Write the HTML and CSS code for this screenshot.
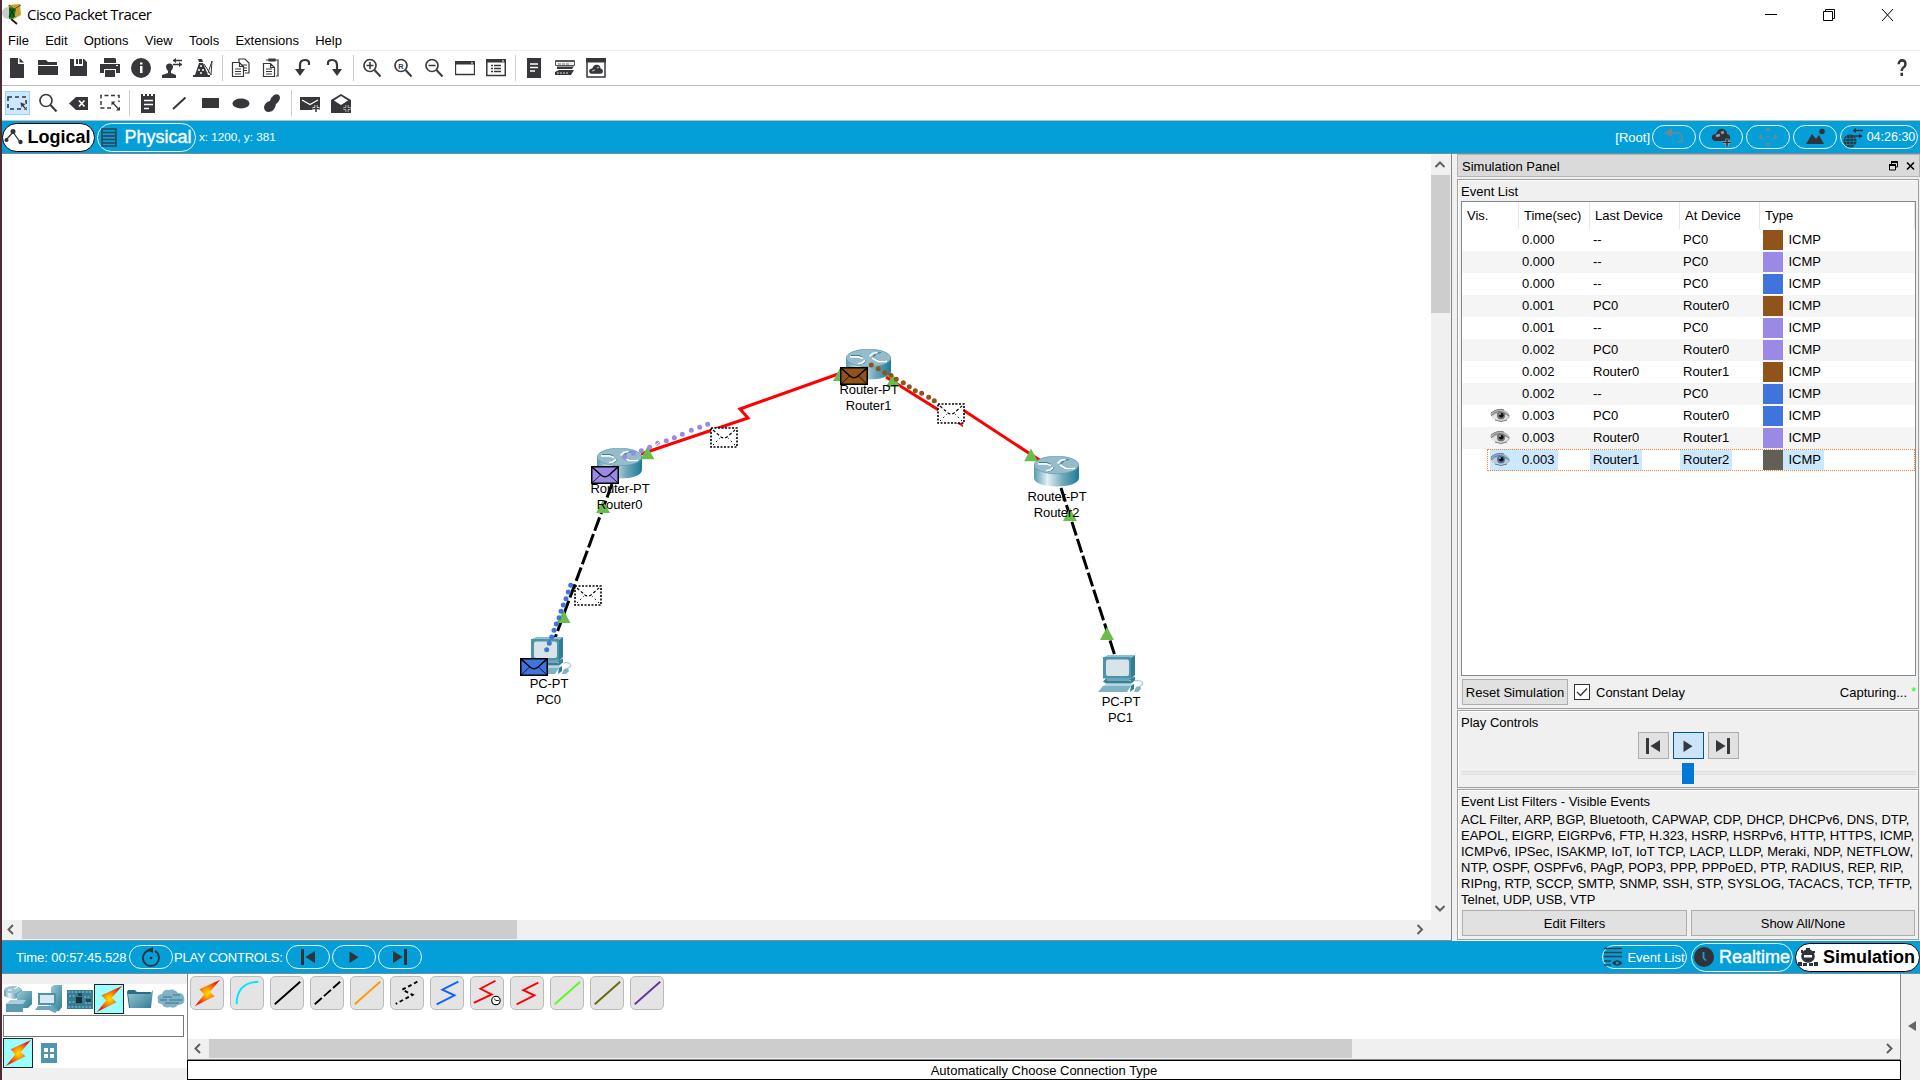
FILE: index.html
```html
<!DOCTYPE html>
<html lang="en">
<head>
<meta charset="utf-8">
<title>Cisco Packet Tracer</title>
<link rel="stylesheet" href="styles.css">
</head>
<body>
<svg class="defs" width="0" height="0">
  <defs>
    <linearGradient id="metal"><stop offset="0" stop-color="#5a9ab0"/><stop offset=".3" stop-color="#e4f0f4"/><stop offset=".65" stop-color="#6fa8ba"/><stop offset="1" stop-color="#1c7b96"/></linearGradient>
    <radialGradient id="fire"><stop offset="0" stop-color="#ffe600"/><stop offset=".45" stop-color="#ff8a00"/><stop offset="1" stop-color="#f01818"/></radialGradient>
    <linearGradient id="teal" x2="1" y2="1"><stop offset="0" stop-color="#9cc8d6"/><stop offset="1" stop-color="#2f7d97"/></linearGradient>
    <symbol id="router" viewBox="0 0 45 31">
      <path d="M0 9v13c0 5 10 8.500 22.500 8.500S45 27 45 22V9z" fill="url(#metal)"/>
      <ellipse cx="22.500" cy="9" rx="22.300" ry="8.800" fill="#94bccb" stroke="#5b96aa" stroke-width=".7"/>
      <path d="M5 6.500h8l4 2M27 8l3-3.500 5-1M28 9.500l4 2h8M14 15l4-1 2-2.500" fill="none" stroke="#3f8197" stroke-width="1.200"/>
      <path d="M4 7.800h8l5 1.700M23.500 7.500l3-3 5-1M26 9l6 3.300h9M12 14.500l4-.500 3-2.500" fill="none" stroke="#fff" stroke-width="1.700"/>
    </symbol>
    <symbol id="pc" viewBox="0 0 46 38">
      <path d="M6 2l4-2h27l-4 3z" fill="#8fc0d0"/><path d="M33 3l4-3v20l-4 4z" fill="#2d7f98"/>
      <rect x="5" y="2" width="28" height="21.500" fill="#4f93a9"/><rect x="8" y="4.500" width="23" height="16.500" rx="2" fill="#d7e5eb"/>
      <path d="M8 23.500h25l4-2v4l-4 3H8l-3-2z" fill="#367f96"/><path d="M9 25h22l2 1" stroke="#a9d1de" fill="none"/>
      <path d="M5 31h28l-4 6H0z" fill="#7fb2c3"/><path d="M5 31l3-2h27l-2 2z" fill="#b5d6e0"/><path d="M33 31l3-2v5l-4 3z" fill="#2d7f98"/>
      <path d="M37 26c4-1 8 0 8 3l-4 3" fill="none" stroke="#a8cbd6" stroke-width="1.200"/><path d="M38 32l4-1 1 3-3 3h-4z" fill="#7fb2c3"/>
    </symbol>
    <symbol id="mail" viewBox="0 0 28 18">
      <rect x=".75" y=".75" width="26.500" height="16.500" stroke="#000" stroke-width="1.500"/>
      <path d="M1 1l9.500 8.500q3.500 2.500 7 0L27 1" fill="none" stroke="#000" stroke-width="1.500"/><path d="M1 17l8.500-8M27 17l-8.500-8" fill="none" stroke="#000" stroke-width=".8"/>
    </symbol>
    <symbol id="ghost" viewBox="0 0 28 21">
      <rect x="1" y="1" width="26" height="19" fill="#fff" stroke="#000" stroke-width="1.600" stroke-dasharray="2 1.500"/>
      <path d="M3 3l8 7q3 2 6 0l8-7" fill="none" stroke="#000" stroke-width="1.100" stroke-dasharray="3 2"/><path d="M3 18l7-7M25 18l-7-7" fill="none" stroke="#000" stroke-width="1" stroke-dasharray="1.500 3"/>
    </symbol>
    <symbol id="tri" viewBox="0 0 14 13"><path d="M7 0l7 13H0z" fill="#69be4b"/></symbol>
    <symbol id="bolt" viewBox="0 0 30 30"><path d="M29 1L7 11l5 5.500L2 29l21-10.500-5-4.500z" fill="url(#fire)"/></symbol>
    <symbol id="first" viewBox="0 0 16 16"><path d="M1 0h3v16H1zM15 2v12L5.500 8z"/></symbol>
    <symbol id="play" viewBox="0 0 16 16"><path d="M3.500 2.500v11.500l9-5.800z"/></symbol>
    <symbol id="last" viewBox="0 0 16 16"><path d="M15 0h-3v16h3zM1 2v12l9.500-6z"/></symbol>
    <symbol id="eye" viewBox="0 0 20 16"><path d="M0 6Q8-1 14 2t6 7q-6 6-14 3Q2 9 0 6z" fill="#b9b9b9"/><path d="M1 9Q7 3 19 8q-4 6-11 5Q4 12 1 9z" fill="#e3e3e3"/><path d="M1 8Q8-1 19 8M5 12q6 3 12 0M1 5q6-5 13-3" fill="none" stroke="#777"/><circle cx="11" cy="7.500" r="4" fill="#707070"/><circle cx="11.300" cy="7.300" r="2.300" fill="#111"/><circle cx="10" cy="6" r=".8" fill="#fff"/></symbol>
    <symbol id="lens" viewBox="0 0 20 20"><circle cx="8" cy="7.500" r="6" fill="none" stroke="#3b3b3f" stroke-width="1.700"/><path d="M12.500 12l6 6.500" stroke="#3b3b3f" stroke-width="2"/></symbol>
    <symbol id="cloud" viewBox="0 0 20 14"><path d="M4 13Q0 12 1 8q1-2 4-2Q7 0 12 1q4 1 4 5 4 1 3 5-1 2-3 2z"/></symbol>
  </defs>
</svg>
<div class="app">
  <div class="edge"></div>
  <div class="window">
    <header class="titlebar">
      <svg class="logo" width="20" height="22" viewBox="0 0 20 22"><path d="M6 2l12-1 1 11-9 5z" fill="#c9a032"/><path d="M7 2l5 4 7-4" fill="none" stroke="#6d4d10"/><circle cx="6" cy="10" r="6" fill="#c8cdc8"/><path d="M7 4l7 2-2 9-5 1z" fill="#0d6b1c"/><path d="M8 6l5 8M12 6l-5 8" stroke="#022f08"/><path d="M9 16l6 5" stroke="#222" stroke-width="2"/></svg>
      <span class="title">Cisco Packet Tracer</span>
      <svg class="winctl" width="132" height="14" viewBox="0 0 132 14" fill="none" stroke="#000"><path d="M0 6.500h12M58.500 3.500h9v9h-9zM60.500 3v-1.500h9v9h-2M117 1l11 12M128 1l-11 12"/></svg>
    </header>
    <nav class="menu"><span>File</span><span>Edit</span><span>Options</span><span>View</span><span>Tools</span><span>Extensions</span><span>Help</span></nav>
    <div class="toolbar first">
      <svg viewBox="0 0 20 20"><path d="M3 0h8v6h6v14H3zM12.500 0L17 4.500h-4.500z"/></svg>
      <svg viewBox="0 0 20 20"><path d="M0 2h8l2 2h9v3H0zM0 8h20v9H0z"/></svg>
      <svg viewBox="0 0 20 20"><path d="M1 1h4v7h9V1h1l3 3v14H1zM10 1h3v5h-3zM7 1h2v5H7z"/></svg>
      <svg viewBox="0 0 20 20"><path d="M4 0h11l1 1v4H4zM0 6h20v9h-4v-4H4v4H0zM5 12h10v7H5z"/><path d="M16 7.500h2" stroke="#fff"/></svg>
      <svg viewBox="0 0 20 20"><circle cx="10" cy="10" r="10"/><path d="M9 8h2.500v7H9zM9 4.500h2.500v2H9z" fill="#fff"/></svg>
      <svg viewBox="0 0 20 20"><path d="M4 9a3.500 3.500 0 017 0q0 2-2 4v2l5 2v3H0v-3l6-2v-2Q4 11 4 9z"/><path d="M11 2.500h9M11 6.500h9" stroke="#36363b" stroke-width="1.300"/><path d="M14 0v5l-3-2.500zM17 4v5l3-2.500z"/></svg>
      <svg viewBox="0 0 20 20"><path d="M5 1h4l1 3h-4zM6 5h4l5 12H2zM0 17h17v2H0z"/><path d="M11 6l7 11 1-14-4 12" fill="none" stroke="#36363b"/><path d="M7 8h2M5 12h2M9 12h2M7 15h2" stroke="#fff" stroke-width="1.500"/></svg>
      <i></i>
      <svg viewBox="0 0 20 20" class="line"><path d="M8 4V1h6l4 4v10h-4"/><path d="M1.500 4.500h7l4 4v10h-11zM8.500 4.500v4h4M4 11h6M4 13.500h6M4 16h6M10 7h6M13 10h3M13 12.500h3"/></svg>
      <svg viewBox="0 0 20 20" class="line"><path d="M4 2h12v16h-2M7 1h6v2H7z"/><path d="M1.500 5.500h7l4 4v9h-11zM8.500 5.500v4h4M4 11h6M4 13.500h6M4 16h6"/></svg>
      <svg viewBox="0 0 20 20"><path d="M16 7V5q0-3-4-3-5 0-5 5v6" fill="none" stroke="#36363b" stroke-width="2.200"/><path d="M2 11h10l-5 7z"/></svg>
      <svg viewBox="0 0 20 20"><path d="M4 7V5q0-3 4-3 5 0 5 5v6" fill="none" stroke="#36363b" stroke-width="2.200"/><path d="M8 11h10l-5 7z"/></svg>
      <i></i>
      <svg viewBox="0 0 20 20"><use href="#lens"/><path d="M4.500 7.500h7M8 4v7" stroke="#36363b" stroke-width="1.500"/></svg>
      <svg viewBox="0 0 20 20"><use href="#lens"/><text x="5.200" y="10.500" class="micro">R</text></svg>
      <svg viewBox="0 0 20 20"><use href="#lens"/><path d="M4.500 7.500h7" stroke="#36363b" stroke-width="1.500"/></svg>
      <svg viewBox="0 0 20 20"><path d="M.5 4.500h19v12H.5z" fill="none" stroke="#36363b" stroke-width="1.300"/><path d="M0 3h20v3.500H0z"/><path d="M16 5h2" stroke="#fff"/></svg>
      <svg viewBox="0 0 20 20"><path d="M.8 2.500h18.500v15H.8z" fill="none" stroke="#36363b" stroke-width="1.500"/><path d="M0 1h20v3.500H0z"/><path d="M16 3h2" stroke="#fff"/><path d="M5 7.500h2M8 7.500h7M5 10.500h2M8 10.500h7M5 13.500h2M8 13.500h7" stroke="#36363b" stroke-width="1.500"/></svg>
      <i></i>
      <svg viewBox="0 0 20 20"><path d="M3 0h14v20H3z"/><path d="M6 6h8M6 9.500h8M6 13h5" stroke="#fff" stroke-width="1.400"/></svg>
      <svg viewBox="0 0 20 20"><path d="M.5 2.500h19v5H.5z" fill="#eee" stroke="#555"/><path d="M1 3.500h18" stroke="#555"/><path d="M3 6h11" stroke="#777" stroke-dasharray="3 1"/><path d="M2 8.500h17l-2 2.500H2zM4 12h15l-3 5H0v-3z"/><path d="M2 15h11" stroke="#ddd" stroke-dasharray="2 1"/></svg>
      <svg viewBox="0 0 20 20"><path d="M1 1h18v18H1z" fill="none" stroke="#36363b" stroke-width="1.500"/><path d="M0 0h20v4.500H0z"/><use href="#cloud" x="2.500" y="6" width="15" height="10.500"/><path d="M6 13l3-1M11 10l2-1" stroke="#bbb" stroke-width="1.300"/></svg>
      <span class="help">?</span>
    </div>
    <div class="toolbar second">
      <span class="picked"><svg viewBox="0 0 20 20"><path d="M1 4h18v12H1z" fill="none" stroke="#36363b" stroke-width="1.600" stroke-dasharray="4 3"/><path d="M13 9l6 2-2 1.500 3 4-1 1-3.500-4-1 2z" stroke="#cce8ff" stroke-width=".6"/></svg></span>
      <svg viewBox="0 0 20 20"><use href="#lens"/></svg>
      <svg viewBox="0 0 20 20"><path d="M0 10.500L7 4h12v13H7z"/><path d="M10 7.500l5.500 6M15.500 7.500l-5.500 6" stroke="#fff" stroke-width="1.700"/></svg>
      <svg viewBox="0 0 20 20"><path d="M11 15H1V2.500h18V9" fill="none" stroke="#36363b" stroke-width="1.500" stroke-dasharray="4 2.500"/><path d="M12.500 9.500l6.500 7" stroke="#36363b" stroke-width="1.300"/><path d="M11.500 8.500h4l-4 4zM20 17.500h-4l4-4z"/></svg>
      <i></i>
      <svg viewBox="0 0 20 20"><path d="M3 1h2v2h2V1h2v2h2V1h2v2h2V1h2v19H3z"/><path d="M6 7.500h9M6 11.500h9M6 15.500h5" stroke="#fff" stroke-width="1.500"/></svg>
      <svg viewBox="0 0 20 20"><path d="M4 16L16.500 4.500" stroke="#36363b" stroke-width="2"/></svg>
      <svg viewBox="0 0 20 20"><path d="M2 5h17v10H2z"/></svg>
      <svg viewBox="0 0 20 20"><ellipse cx="10" cy="10.500" rx="8.500" ry="5"/></svg>
      <svg viewBox="0 0 20 20"><path d="M12 2q5-2 6 2 0 4-4 7-1 7-7 8-5 0-5-5 1-5 6-6 1-4 4-6z"/></svg>
      <i></i>
      <svg viewBox="0 0 20 20"><path d="M0 4h20v13H0z"/><path d="M2 7l8 4.500L18 7" fill="none" stroke="#fff" stroke-width="1.300"/><path d="M12.500 15.500h7M16 12v7" stroke="#fff" stroke-width="3"/><path d="M12.500 15.500h7M16 12v7" stroke="#36363b" stroke-width="1.500"/></svg>
      <svg viewBox="0 0 20 20"><path d="M0 7l10-6 10 6v13H0z"/><path d="M3 7.500L10 3l7 4.500-7 4.500z" fill="#fff"/><path d="M12.500 15.500h7M16 12v7" stroke="#ccc" stroke-width="3"/><path d="M12.500 15.500h7M16 12v7" stroke="#36363b" stroke-width="1.500"/></svg>
    </div>
    <div class="bluebar top">
      <div class="pill big on logical"><svg width="19" height="16" viewBox="0 0 19 16"><path d="M2 11l7-8 7 10" fill="none" stroke="#333" stroke-width="1.300"/><circle cx="2.500" cy="11" r="2"/><circle cx="9" cy="2.500" r="2.500"/><circle cx="16.500" cy="13" r="2.200"/></svg>Logical</div>
      <div class="pill big physical"><svg width="16" height="19" viewBox="0 0 16 19"><path d="M1 1h14v17H1zM1 4.500h14M1 8h14M1 11.500h14M1 15h14" fill="none" stroke="#2c4250" stroke-width="1.500"/></svg>Physical</div>
      <span class="coords">x: 1200, y: 381</span>
      <span class="root">[Root]</span>
      <div class="pill"><svg width="22" height="18" viewBox="0 0 22 18"><path d="M8 5h7q5 0 4 9h-5" fill="none" stroke="#728793" stroke-width="1.700"/><path d="M1 5l8-5v9z" fill="#728793"/></svg></div>
      <div class="pill"><svg width="22" height="20" viewBox="0 0 22 20" fill="#303338"><use href="#cloud" x="1" y="1" width="20" height="14"/><path d="M6 9l4-1M11 6l3-1" stroke="#999" stroke-width="2.500"/><path d="M13 15.500h8M17 11.500v8" stroke="#9bc" stroke-width="3"/><path d="M13 15.500h8M17 11.500v8" stroke="#333" stroke-width="1.600"/></svg></div>
      <div class="pill"><svg width="20" height="20" viewBox="0 0 20 20"><path fill="#728793" d="M7 4h6l-3-4zM7 16h6l-3 4zM4 7v6l-4-3zM16 7v6l4-3zM9 9h2v2H9z"/></svg></div>
      <div class="pill"><svg width="20" height="18" viewBox="0 0 20 18"><path d="M1 16l6-10 4 5 3-4 5 9z"/><circle cx="17" cy="3.500" r="2.800"/></svg></div>
      <div class="pill clock"><svg width="22" height="21" viewBox="0 0 22 21"><circle cx="8" cy="14" r="6.500"/><path d="M2 11.500h12M2 14.500h12M3 17.500h10M8 8v13M5 9q-2 5 0 10M11 9q2 5 0 10" fill="none" stroke="#0486b8" stroke-width=".8"/><path d="M11 3.500h10M11 9h9" stroke="#303338" stroke-width="1.500"/><path d="M14 1v5l-3-2.500zM17 6.500v5l3-2.500z"/></svg>04:26:30</div>
    </div>
    <main class="main">
      <section class="work">
        <svg class="topology" width="1429" height="766" viewBox="2 154 1429 766">
          <g fill="none" stroke="#f00" stroke-width="3"><path d="M641 454L748 418l-8-9 101-36"/><path d="M886 377l75 47-4-18 84 55"/></g>
          <g stroke="#000" stroke-width="3" stroke-dasharray="14.300 3.500"><path d="M612 484l-57 154"/><path d="M1061 488l54 168"/></g>
          <g>
            <use href="#router" x="597" y="448" width="45" height="31"/><use href="#router" x="846" y="349" width="45" height="31"/><use href="#router" x="1034" y="456" width="45" height="31"/>
            <use href="#pc" x="526" y="637" width="46" height="38"/><use href="#pc" x="1098" y="655" width="46" height="38"/>
          </g>
          <g>
            <use href="#tri" x="640.500" y="446.500" width="14" height="13"/><use href="#tri" x="596" y="500" width="14" height="13"/><use href="#tri" x="556.500" y="610" width="14" height="13"/><use href="#tri" x="833" y="368" width="14" height="13"/><use href="#tri" x="886" y="374" width="14" height="13"/><use href="#tri" x="1024" y="448.500" width="14" height="13"/><use href="#tri" x="1063" y="508" width="14" height="13"/><use href="#tri" x="1100" y="627" width="14" height="13"/>
          </g>
          <g class="label">
            <text x="620" y="493">Router-PT</text><text x="619.500" y="509">Router0</text>
            <text x="869" y="394">Router-PT</text><text x="868.500" y="410">Router1</text>
            <text x="1057" y="501">Router-PT</text><text x="1056.500" y="517">Router2</text>
            <text x="549" y="688">PC-PT</text><text x="548.500" y="704">PC0</text>
            <text x="1121" y="706">PC-PT</text><text x="1120.500" y="722">PC1</text>
          </g>
          <use href="#mail" x="520" y="658" width="28" height="18" fill="#3f74dc"/><use href="#mail" x="591" y="466" width="28" height="18" fill="#9a8ae6"/><use href="#mail" x="840" y="367" width="28" height="18" fill="#90531a"/>
          <use href="#ghost" x="574" y="585" width="28" height="21"/><use href="#ghost" x="710" y="427" width="28" height="21"/><use href="#ghost" x="937" y="403" width="28" height="21"/>
          <g fill="none" stroke-width="5" stroke-linecap="round">
            <path stroke="#9a8ae6" d="M624.700 457.300h0M633.300 453.300h0M641.300 450.700h0M649.700 447.300h0M657.700 443.300h0M666.300 440.700h0M674.300 437.700h0M682.300 434.300h0M691.300 430.300h0M699.700 427.300h0M707.700 424.300h0"/>
            <path stroke="#3f74dc" d="M546.700 649.700h0M549.300 643.300h0M551.700 637h0M554 630.300h0M556.300 624h0M559 617.700h0M561 611.300h0M563.300 605h0M566 598.700h0M568.300 592h0M570.700 585.300h0"/>
            <path stroke="#90531a" d="M871.300 365h0M878.300 368.700h0M884.700 372.700h0M890.700 375.300h0M896.300 379.300h0M903.300 382.700h0M909.300 386.700h0M915.300 390.700h0M921.700 393.300h0M928.700 397.300h0M934.300 400.700h0"/>
            <path stroke="#fff" stroke-width="1" d="M656 445l3.500-3.500M657.500 446l2.500-2.500"/>
          </g>
        </svg>
        <div class="vscroll"><svg width="18" height="21" viewBox="0 0 18 21"><path d="M4.500 13L9 8.500l4.500 4.500"/></svg><b></b><svg class="end" width="18" height="20" viewBox="0 0 18 20"><path d="M4.500 6L9 10.500 13.500 6"/></svg></div>
        <div class="hscroll"><svg width="20" height="19" viewBox="0 0 20 19"><path d="M11 5L6.500 9.500 11 14"/></svg><b></b><svg class="end" width="20" height="19" viewBox="0 0 20 19"><path d="M6.500 5l4.500 4.500L6.500 14"/></svg></div>
        <div class="corner"></div>
      </section>
      <aside class="panel">
        <div class="paneltitle">Simulation Panel<svg width="30" height="12" viewBox="0 0 30 12" fill="none" stroke="#000"><path d="M1.500 5h6v5h-6zM3.500 4V2h6v5H8" /><path d="M1 5h7M3 2h7" stroke-width="2"/><path d="M19 2.500l7 7M26 2.500l-7 7" stroke-width="1.600"/></svg></div>
        <section class="group events">
          <div class="cap">Event List</div>
          <div class="table">
            <div class="thead"><span>Vis.</span><span>Time(sec)</span><span>Last Device</span><span>At Device</span><span>Type</span></div>
            <div class="row"><span></span><span>0.000</span><span>--</span><span>PC0</span><span><i class="brown"></i>ICMP</span></div>
            <div class="row"><span></span><span>0.000</span><span>--</span><span>PC0</span><span><i class="violet"></i>ICMP</span></div>
            <div class="row"><span></span><span>0.000</span><span>--</span><span>PC0</span><span><i class="blue"></i>ICMP</span></div>
            <div class="row"><span></span><span>0.001</span><span>PC0</span><span>Router0</span><span><i class="brown"></i>ICMP</span></div>
            <div class="row"><span></span><span>0.001</span><span>--</span><span>PC0</span><span><i class="violet"></i>ICMP</span></div>
            <div class="row"><span></span><span>0.002</span><span>PC0</span><span>Router0</span><span><i class="violet"></i>ICMP</span></div>
            <div class="row"><span></span><span>0.002</span><span>Router0</span><span>Router1</span><span><i class="brown"></i>ICMP</span></div>
            <div class="row"><span></span><span>0.002</span><span>--</span><span>PC0</span><span><i class="blue"></i>ICMP</span></div>
            <div class="row"><span><svg width="20" height="16"><use href="#eye"/></svg></span><span>0.003</span><span>PC0</span><span>Router0</span><span><i class="blue"></i>ICMP</span></div>
            <div class="row"><span><svg width="20" height="16"><use href="#eye"/></svg></span><span>0.003</span><span>Router0</span><span>Router1</span><span><i class="violet"></i>ICMP</span></div>
            <div class="row sel"><span><svg width="20" height="16"><use href="#eye"/></svg></span><span><em>0.003</em></span><span><em>Router1</em></span><span><em>Router2</em></span><span><i class="gray"></i><em>ICMP</em></span></div>
          </div>
          <div class="simrow"><button class="reset">Reset Simulation</button><span class="check"><svg width="14" height="14" viewBox="0 0 14 14"><path d="M2 7l3.500 3.500L12 3.500" fill="none" stroke="#333" stroke-width="1.300"/></svg></span><span>Constant Delay</span><span class="capturing">Capturing...</span><span class="star">*</span></div>
        </section>
        <section class="group controls">
          <div class="cap">Play Controls</div>
          <div class="btns"><button><svg width="16" height="16"><use href="#first"/></svg></button><button class="active"><svg width="16" height="16"><use href="#play"/></svg></button><button><svg width="16" height="16"><use href="#last"/></svg></button></div>
          <div class="slider"><b></b></div>
        </section>
        <section class="group filters">
          <div class="cap">Event List Filters - Visible Events</div>
          <div class="list">ACL Filter, ARP, BGP, Bluetooth, CAPWAP, CDP, DHCP, DHCPv6, DNS, DTP,<br>EAPOL, EIGRP, EIGRPv6, FTP, H.323, HSRP, HSRPv6, HTTP, HTTPS, ICMP,<br>ICMPv6, IPSec, ISAKMP, IoT, IoT TCP, LACP, LLDP, Meraki, NDP, NETFLOW,<br>NTP, OSPF, OSPFv6, PAgP, POP3, PPP, PPPoED, PTP, RADIUS, REP, RIP,<br>RIPng, RTP, SCCP, SMTP, SNMP, SSH, STP, SYSLOG, TACACS, TCP, TFTP,<br>Telnet, UDP, USB, VTP</div>
          <div class="fbtns"><button>Edit Filters</button><button>Show All/None</button></div>
        </section>
      </aside>
    </main>
    <div class="bluebar bottom">
      <span class="time">Time: 00:57:45.528</span>
      <div class="pill"><svg width="20" height="20" viewBox="0 0 20 20"><path d="M9 3a8 8 0 105 1" fill="none" stroke="#303338" stroke-width="1.800"/><path d="M6 3l6-3v6z"/><circle cx="10" cy="11" r="1.300"/></svg></div>
      <span class="pc-label">PLAY CONTROLS:</span>
      <div class="pill gap"><svg width="16" height="16"><use href="#first"/></svg></div>
      <div class="pill gap"><svg width="16" height="16"><use href="#play"/></svg></div>
      <div class="pill gap"><svg width="16" height="16"><use href="#last"/></svg></div>
      <div class="pill evlist"><svg width="19" height="20" viewBox="0 0 19 20"><path d="M0 1.500h18M0 5.500h18M0 9.500h18M0 14h7M0 18h7" stroke="#2c4250" stroke-width="1.500"/><path d="M8 16q5-5.500 10.500 0-5.500 5.500-10.500 0z"/><circle cx="13.200" cy="16" r="1.500" fill="#049fd9"/></svg>Event List</div>
      <div class="pill big realtime"><svg width="20" height="20" viewBox="0 0 20 20"><circle cx="10" cy="10" r="10"/><path d="M9.500 5v6l2.500 2.500" fill="none" stroke="#1aa0d6" stroke-width="1.700"/></svg>Realtime</div>
      <div class="pill big on simulation"><svg width="20" height="18" viewBox="0 0 20 18"><circle cx="10" cy="8" r="6.800"/><path d="M8 0h4v3H8zM0 14h4v4H0zM5 15h4v3H5zM11 15h4v3h-4zM16 14h4v4h-4zM3 2h2v3H3zM15 3h2v2h-2z"/><path d="M6 7h8v2.500H6z" fill="#fff"/></svg>Simulation</div>
    </div>
    <footer class="bottom-area">
      <div class="palette">
        <div class="cats">
          <svg width="29" height="28" viewBox="0 0 29 28"><ellipse cx="9" cy="5" rx="9" ry="4" fill="#9cc4d1"/><path d="M0 5q9 7 18 0v6q-9 6-18 0z" fill="url(#metal)"/><path d="M4 5h4M10 4l4-2" stroke="#fff"/><path d="M13 9l4-3h11v13l-4 4H13z" fill="url(#teal)"/><path d="M2 19l5-4h15l-3 5v7H2z" fill="#5b9bb0"/><path d="M2 19l5-4h15l-3 4z" fill="#a9cfda"/></svg>
          <svg class="c2" width="28" height="28" viewBox="0 0 28 28"><path d="M16 2l3-2h8v22l-3 4h-8z" fill="url(#teal)"/><path d="M3 8h18v12H3z" fill="#4f93a9"/><path d="M5 10h14v8H5z" fill="#d7e8ee"/><path d="M3 21h14l-2 4H0zM14 20l9 5-3 3-8-4z" fill="#6aa5b8"/></svg>
          <svg class="c3" width="26" height="19" viewBox="0 0 26 19"><rect width="26" height="19" fill="#347d95"/><path d="M1 2h24M1 17h24M2 6h7M17 7h7M2 12h6M18 13h6" stroke="#9cc6d2" stroke-dasharray="2 1.500"/><rect x="9" y="7" width="6" height="6" fill="#162f39"/><path d="M11 3h4v3h-4zM19 9h5v3h-5z" fill="#1e4654"/></svg>
          <span class="tile c4"><svg width="28" height="28"><use href="#bolt"/></svg></span>
          <svg class="c5" width="27" height="20" viewBox="0 0 27 20"><path d="M0 3l1-2h7l2 2h14v16H2z" fill="#286e86"/><path d="M1 5h22l3-4-2 18H3z" fill="url(#teal)"/></svg>
          <svg class="c5" width="28" height="20" viewBox="0 0 28 20"><path d="M5 15Q0 15 1 11q-2-5 4-6Q7 0 12 1q5-2 9 3 6 0 6 5 2 6-6 7-3 4-8 2-6 2-8-3z" fill="#7fb2c4"/><path d="M6 8h9M3 11h7M12 11h13M8 14h14M16 6h7" stroke="#4d8ba0" stroke-width="1.500"/></svg>
        </div>
        <div class="search"></div>
        <div class="subs"><span class="tile"><svg width="28" height="28"><use href="#bolt"/></svg></span><svg width="16" height="20" viewBox="0 0 16 20"><path d="M0 0h16v20H0z" fill="#4f95ad"/><path d="M3 5h4v4H3zM9 5h4v4H9zM3 11h4v4H3zM9 11h4v4H9z" fill="#fff"/></svg></div>
      </div>
      <div class="devices">
        <div class="conns">
          <svg viewBox="0 0 34 34"><use href="#bolt" x="2" y="2" width="30" height="30"/></svg>
          <svg viewBox="0 0 34 34"><path d="M6 29Q6 6 29 5" stroke="#00e5ff"/></svg>
          <svg viewBox="0 0 34 34"><path d="M4 29L31 5" stroke="#000"/></svg>
          <svg viewBox="0 0 34 34"><path d="M4 29L31 5" stroke="#000" stroke-dasharray="10 3"/></svg>
          <svg viewBox="0 0 34 34"><path d="M4 29L31 5" stroke="#ff9900"/></svg>
          <svg viewBox="0 0 34 34"><path d="M28 5L12 13.500l11 5.500L5 28.500" stroke="#000" stroke-dasharray="4 3"/></svg>
          <svg viewBox="0 0 34 34"><path d="M29 5L12 13.500l13 6L6 29" stroke="#0866ff"/></svg>
          <svg viewBox="0 0 34 34"><path d="M26 4L10 12.500l12 6L3 27.500" stroke="#f00"/><circle cx="26.500" cy="25" r="4.500" fill="#fff" stroke="#000" stroke-width="1.200"/><path d="M26.500 25l-2-2M26.500 25h3" stroke="#000" stroke-width="1"/></svg>
          <svg viewBox="0 0 34 34"><path d="M29 6L13 14l12 5.500L6 29" stroke="#f00"/></svg>
          <svg viewBox="0 0 34 34"><path d="M4 29L31 5" stroke="#63f52b"/></svg>
          <svg viewBox="0 0 34 34"><path d="M4 29L31 5" stroke="#6b6708"/></svg>
          <svg viewBox="0 0 34 34"><path d="M4 29L31 5" stroke="#663399"/></svg>
        </div>
        <div class="hscroll"><svg width="21" height="19" viewBox="0 0 21 19"><path d="M12 5L7.500 9.500 12 14"/></svg><b></b><svg class="end" width="20" height="19" viewBox="0 0 20 19"><path d="M7 5l4.500 4.500L7 14"/></svg></div>
        <div class="hint">Automatically Choose Connection Type</div>
      </div>
      <div class="collapse"><svg width="8" height="10" viewBox="0 0 8 10"><path d="M8 0v10L0 5z" fill="#666"/></svg></div>
    </footer>
  </div>
</div>
</body>
</html>
```
FILE: styles.css
```css
* { box-sizing: border-box; }
body { margin: 0; width: 1920px; height: 1080px; overflow: hidden; font: 13px "Liberation Sans", Arial, sans-serif; color: #000; background: #fff; }
svg { display: block; flex: none; }
.defs { position: absolute; }
button { font: inherit; padding: 0; margin: 0; border: 1px solid #adadad; background: #e1e1e1; color: #000; display: flex; align-items: center; justify-content: center; }
.app { display: flex; height: 1080px; }
.edge { width: 2px; background: #4b2b35; }
.window { width: 1918px; display: flex; flex-direction: column; }

.titlebar { height: 30px; display: flex; align-items: center; }
.logo { margin: -2px 0 0 0; }
.title { margin: -2px 0 0 5px; font: 15px "Open Sans", "Noto Sans", sans-serif; letter-spacing: -0.56px; white-space: nowrap; }
.winctl { margin: -1px 23px 0 auto; }
.menu { height: 20px; padding: 1px 0 0 6px; display: flex; gap: 16.2px; align-items: center; line-height: 19px; }

.toolbar { height: 35px; display: flex; align-items: center; border-top: 1px solid #f0f0f0; fill: #36363b; }
.toolbar > svg { width: 20px; height: 20px; margin: 0 6px 0 5px; }
.toolbar i { width: 7px; height: 26px; background: linear-gradient(#ccc, #ccc) 3px 0 / 1px 100% no-repeat; }
.toolbar.first { height: 36px; margin-top: 0; border-bottom: 1px solid #bdbdbd; }
.toolbar.second { height: 35px; border-top: 0; border-bottom: 1px solid #bdbdbd; }
.line { fill: none; stroke: #36363b; stroke-width: 1.2; }
.micro { font: bold 7.5px "Liberation Sans", sans-serif; }
.help { margin: 0 11px 0 auto; font: bold 23px/20px "Liberation Sans", sans-serif; color: #36363b; transform: scaleX(.8); }
.picked { width: 25px; height: 24px; margin: 0 3px; padding: 1px 2px; background: #cce8ff; border: 1px solid #99d1ff; }
.picked svg { width: 20px; height: 20px; margin-left: -1px; }

.bluebar { height: 33px; background: #049fd9; color: #fff; display: flex; align-items: center; fill: #303338; white-space: nowrap; }
.bluebar.top { border-bottom: 1px solid #828790; }
.pill { width: 44px; height: 24px; border: 1px solid #e6f5fb; border-radius: 12px; display: flex; align-items: center; justify-content: center; flex: none; }
.top .pill:not(.big) { margin-left: 3px; }
.pill.big { height: 29px; border-radius: 15px; font-size: 18px; -webkit-text-stroke: .35px currentColor; }
.pill.on { background: #fff; border-color: #000; color: #000; font-weight: bold; -webkit-text-stroke: 0; }
.logical { width: 93px; gap: 4px; margin-left: 0; padding-right: 2px; }
.physical { width: 99px; margin-left: 2px; gap: 7px; }
.coords { margin: -2px 0 0 3px; font-size: 11.7px; }
.root { margin: 0 -1px 0 auto; }
.top .clock { width: 78px; gap: 3px; font-size: 12.5px; margin-right: 2px; padding-right: 1px; }

.main { height: 787px; display: flex; background: #f0f0f0; }
.work { width: 1450px; display: grid; grid-template-columns: 1429px 20px; grid-template-rows: 766px 20px; border-right: 1px solid #828790; border-bottom: 1px solid #828790; }
.topology { background: #fff; }
.label { font: 13px "Liberation Sans", Arial, sans-serif; text-anchor: middle; letter-spacing: -.1px; }
.vscroll, .hscroll { background: #f0f0f0; display: flex; }
.vscroll { flex-direction: column; }
.vscroll svg, .hscroll svg { fill: none; stroke: #606060; stroke-width: 2; }
.vscroll b { height: 138px; width: 19px; background: #cdcdcd; }
.hscroll b { width: 495px; height: 19px; background: #cdcdcd; }
.vscroll .end { margin-top: auto; }
.hscroll .end { margin-left: auto; }

.panel { margin-left: 5px; width: 463px; display: flex; flex-direction: column; }
.paneltitle { height: 23px; background: #dadada; border: 1px solid #b4b4b4; padding: 1px 3px 0 4px; display: flex; justify-content: space-between; align-items: center; }
.paneltitle svg { margin-right: -2px; }
.group { border: 1px solid #a0a0a0; box-shadow: inset 1px 1px #fff; width: 462px; padding: 0 3px; }
.cap { line-height: 16px; }
.events { margin-top: 2px; height: 530px; }
.events .cap { margin-top: 4px; }
.table { margin-top: 1px; height: 475px; width: 455px; border: 1px solid #828790; background: #fff; }
.thead, .row { display: grid; grid-template-columns: 57px 71px 90px 80px 1fr; align-items: center; }
.thead { height: 27px; }
.thead span { height: 27px; line-height: 27px; padding-left: 5px; border-right: 1px solid #e5e5e5; }
.row { height: 22px; line-height: 22px; }
.row span { padding-left: 3px; height: 22px; display: flex; align-items: center; }
.row span:first-child { padding-left: 28px; }
.row:nth-child(odd) { background: #f5f5f5; }
.row i { width: 20px; height: 20px; margin-right: 5.5px; }
.brown { background: #90531a; } .violet { background: #9a8ae6; } .blue { background: #3f74dc; } .gray { background: #645f55; }
.row.sel { background: #fff; margin-left: 25px; grid-template-columns: 32px 71px 90px 80px 1fr; outline: 1px dotted #ff8020; outline-offset: -1px; }
.row.sel span:first-child { padding-left: 3px; background: #cce8ff; background-clip: content-box; }
.row.sel svg { filter: sepia(1) hue-rotate(175deg) saturate(1.5) brightness(.8); }
.row em { font-style: normal; line-height: 20px; padding: 0 3px; margin-left: -3px; background: #cce8ff; }
.row i + em { padding-left: 6px; margin-left: -6px; }
.simrow { height: 32px; display: flex; align-items: center; padding-left: 1px; }
.reset { width: 106px; height: 26px; }
.check { width: 16px; height: 16px; border: 1px solid #333; background: #fff; margin: 0 6px; }
.capturing { margin-left: auto; }
.star { color: #0f0; width: 5px; margin: -2px -1px 0 4px; }
.controls { margin-top: 1px; height: 78px; }
.controls .cap { margin-top: 4px; }
.btns { display: flex; justify-content: center; gap: 4px; margin: 1px 0 0 0; fill: #36363b; }
.btns button { width: 31px; height: 27px; }
.btns .active { background: #cce4f7; border-color: #005499; }
.slider { width: 455px; height: 21px; margin-top: 4px; display: flex; justify-content: center; background: linear-gradient(#d6d6d6, #e7eaea 25%, #e7eaea 75%, #d6d6d6) 0 8px / 100% 4px no-repeat; }
.slider b { width: 12px; background: #0078d7; margin-right: 1px; }
.filters { margin-top: 1px; height: 151px; }
.filters .cap { margin-top: 4px; }
.list { line-height: 16px; margin-top: 2px; white-space: nowrap; letter-spacing: .01px; }
.fbtns { display: grid; grid-template-columns: 225px 224px; gap: 4px; margin: 2px 0 0 1px; }
.fbtns button { height: 26px; }

.bluebar.bottom { height: 33px; padding: 0; border-bottom: 1px solid #828790; }
.time { margin-left: 14px; width: 113px; letter-spacing: -.06px; }
.pc-label { margin-left: 1px; width: 110px; letter-spacing: -.2px; }
.pill.gap { margin-left: 2px; }
.pill.evlist { width: 85px; margin-left: auto; gap: 4px; }
.realtime { width: 102px; margin-left: 4px; gap: 5px; }
.simulation { width: 125px; margin-left: 2px; gap: 5px; padding-right: 2px; }

.bottom-area { height: 106px; display: flex; background: #f0f0f0; }
.palette { width: 185px; height: 84px; margin-top: 10px; background: #fff; }
.cats { height: 30px; display: flex; align-items: center; padding-left: 2px; }
.tile { width: 30px; height: 30px; background: #99ffff; border: 1px solid #222; }
.c2 { margin-left: 2px; }
.c3 { margin-left: 4px; }
.c4 { margin-left: 1px; }
.c5 { margin-left: 3px; }
.search { width: 181px; height: 22px; margin: 1px; border: 1px solid #777; }
.subs { display: flex; align-items: center; gap: 8px; padding-left: 1px; }
.devices { width: 1714px; display: flex; flex-direction: column; }
.conns { height: 65px; background: #fff; border-left: 1px solid #828790; border-right: 1px solid #828790; display: flex; gap: 6px; padding: 2px; }
.conns svg { width: 34px; height: 34px; background: #e4e4e4; border: 1px solid #bababa; border-radius: 5px; fill: none; stroke-width: 2; }
.devices .hscroll { height: 21px; border: solid #828790; border-width: 0 1px 1px; }
.devices .hscroll b { width: 1143px; }
.hint { height: 20px; background: #fff; border: 1px solid #000; text-align: center; line-height: 19px; }
.collapse { width: 19px; padding: 47px 0 0 7px; }
```
